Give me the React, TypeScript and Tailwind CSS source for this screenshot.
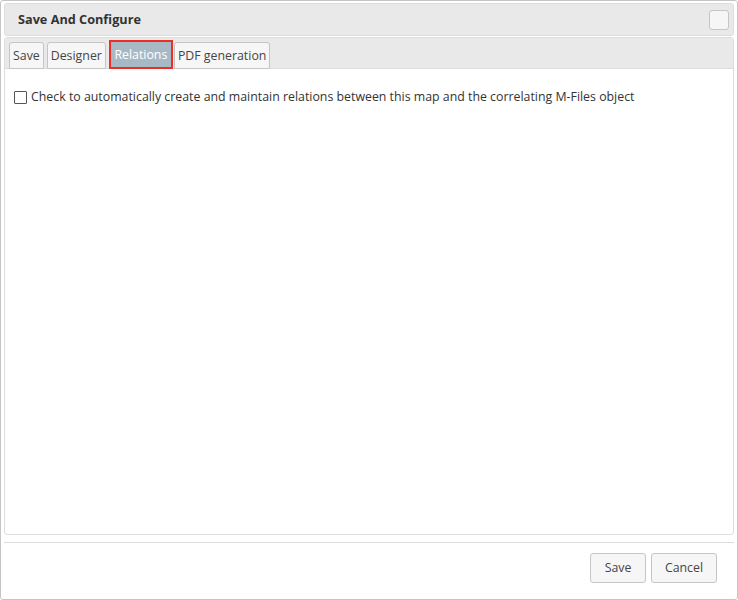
import { useState } from "react";

const tabs = ["Save", "Designer", "Relations", "PDF generation"];

export default function App() {
  const [active, setActive] = useState("Relations");
  const [checked, setChecked] = useState(false);

  return (
    <div
      className="flex h-[600px] w-[738px] flex-col rounded-[3px] border border-[#c5c5c5] bg-white px-[3px] pt-[2px] text-[12.35px] text-[#333]"
      style={{ fontFamily: '"Open Sans", "Noto Sans", sans-serif' }}
    >
      <div className="flex h-[33px] items-center justify-between rounded-[3px] border border-[#dddddd] bg-[#e9e9e9] pl-[13px] pr-[4px]">
        <span className="pt-[1px] text-[12.7px] font-bold text-[#333]">Save And Configure</span>
        <button
          type="button"
          aria-label="Close"
          className="h-[20px] w-[20px] rounded-[3px] border border-[#c5c5c5] bg-[#f6f6f6]"
        />
      </div>

      <div className="mt-[1px] flex flex-1 flex-col rounded-[3px] border border-[#dddddd]">
        <div className="flex h-[31px] items-end gap-[3px] rounded-t-[3px] border-b border-[#dddddd] bg-[#e9e9e9] pl-[4px]">
          {tabs.map((tab) => {
            const isActive = tab === active;
            return (
              <button
                key={tab}
                type="button"
                onClick={() => setActive(tab)}
                className={
                  isActive
                    ? "-mb-px -mr-[2px] h-[29px] w-[64px] border-2 border-[#ee2e24] bg-[#a8b9c6] leading-[24px] text-white"
                    : "-mb-px h-[27px] rounded-t-[3px] border border-[#c5c5c5] bg-[#f6f6f6] px-[3px] leading-[24px] text-[#454545]"
                }
              >
                {tab}
              </button>
            );
          })}
        </div>

        <div className="flex-1 px-[9px] pt-[19px]">
          <label className="flex items-center gap-[4px] text-[#333]">
            <input
              type="checkbox"
              checked={checked}
              onChange={(e) => setChecked(e.target.checked)}
              className="h-[13px] w-[13px] appearance-none rounded-[1px] border border-[#555] bg-white"
            />
            Check to automatically create and maintain relations between this map and the correlating M-Files object
          </label>
        </div>
      </div>

      <div className="mb-[16px] mt-[7px] border-t border-[#dddddd] pt-[10px]">
        <div className="flex justify-end gap-[5px] pr-[17px]">
          <button
            type="button"
            className="h-[30px] w-[56px] rounded-[3px] border border-[#c5c5c5] bg-[#f6f6f6] text-[#454545]"
          >
            Save
          </button>
          <button
            type="button"
            className="h-[30px] w-[66px] rounded-[3px] border border-[#c5c5c5] bg-[#f6f6f6] text-[#454545]"
          >
            Cancel
          </button>
        </div>
      </div>
    </div>
  );
}
